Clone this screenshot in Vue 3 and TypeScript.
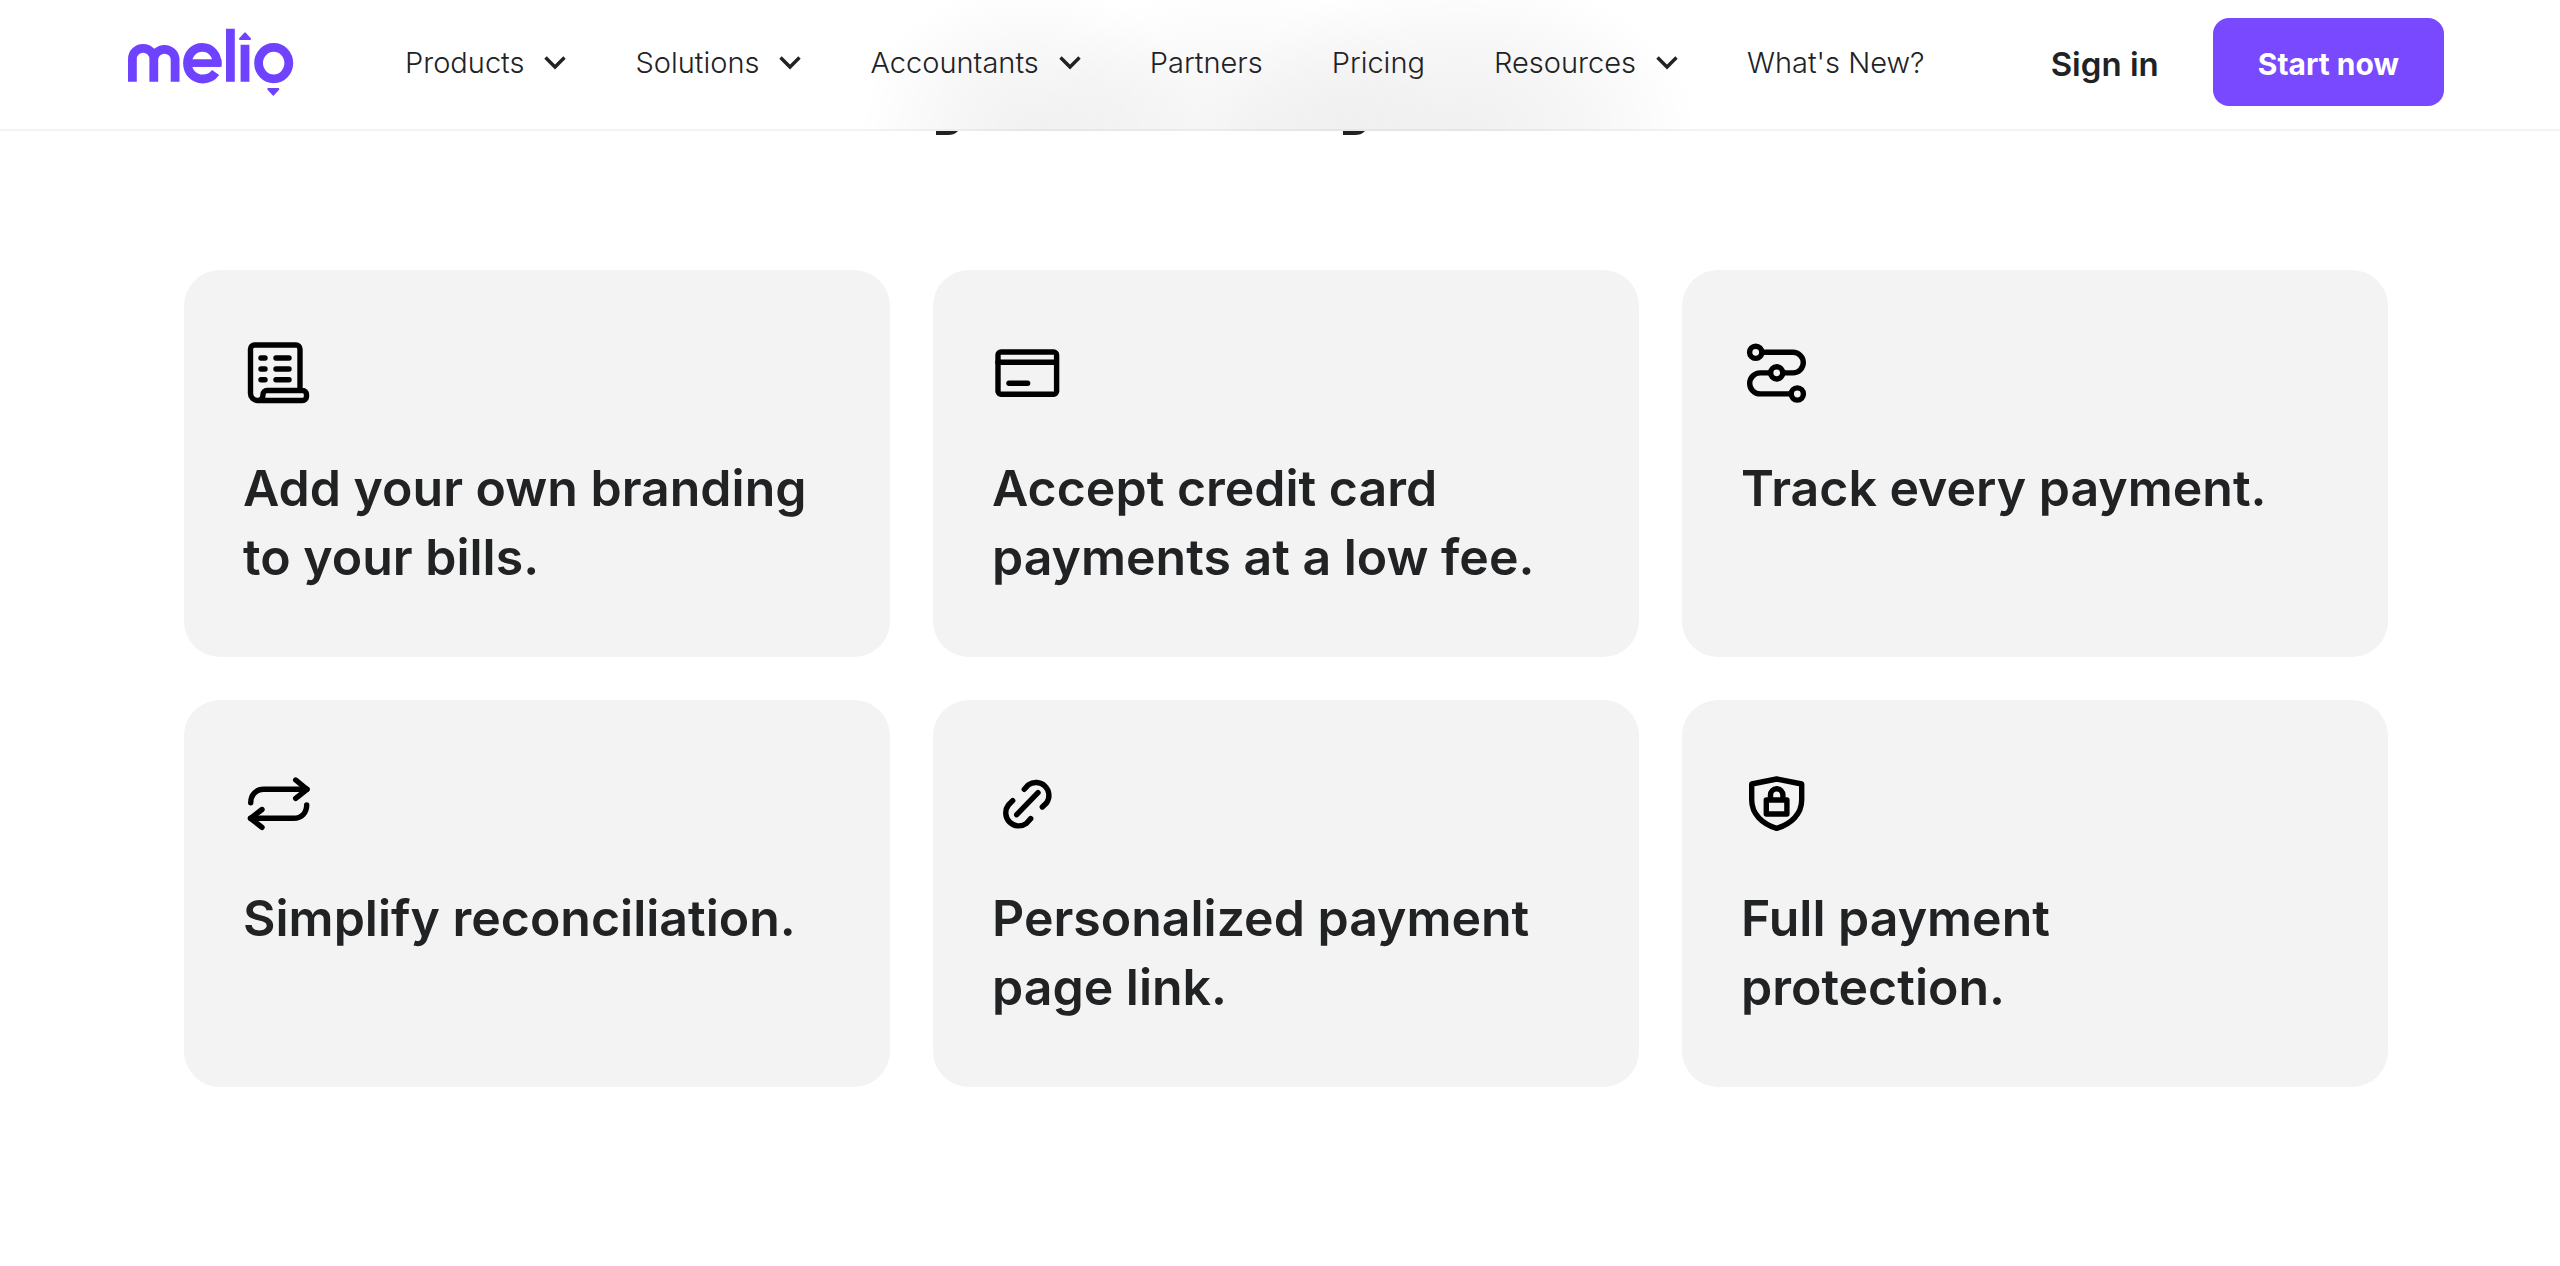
<script setup lang="ts">
interface NavItem {
  label: string
  menu: boolean
}

interface Feature {
  title: string
  icon: string[]
}

const navItems: NavItem[] = [
  { label: 'Products', menu: true },
  { label: 'Solutions', menu: true },
  { label: 'Accountants', menu: true },
  { label: 'Partners', menu: false },
  { label: 'Pricing', menu: false },
  { label: 'Resources', menu: true },
  { label: "What's New?", menu: false },
]

const features: Feature[] = [
  {
    title: 'Add your own branding to your bills.',
    icon: [
      'M56 52V11a4 4 0 0 0-4-4H10.500a4 4 0 0 0-4 4v44.500a7 7 0 0 0 7 7h45a4 4 0 0 0 4-4v-2a4 4 0 0 0-4-4H23a4 4 0 0 0-4 4c0 3.500-1 6-5 6',
      'M17 20h4M32 20h13M17 31h4M32 31h13M17 41.700h4M32 41.700h13',
    ],
  },
  {
    title: 'Accept credit card payments at a low fee.',
    icon: ['M8 14h52.600a3 3 0 0 1 3 3v36.300a3 3 0 0 1-3 3H8a3 3 0 0 1-3-3V17a3 3 0 0 1 3-3z', 'M5 24.300h58', 'M16 45.300h18.600'],
  },
  {
    title: 'Track every payment.',
    icon: [
      'M7.600 14.300a6.100 6.100 0 1 0 12.200 0a6.100 6.100 0 1 0-12.200 0',
      'M28.600 34.900a6.100 6.100 0 1 0 12.200 0a6.100 6.100 0 1 0-12.200 0',
      'M49.200 56a6.100 6.100 0 1 0 12.200 0a6.100 6.100 0 1 0-12.200 0',
      'M20 14.300h31a10.300 10.300 0 0 1 0 20.600H41',
      'M28.500 34.900H18.200a10.500 10.500 0 0 0 0 21H49',
    ],
  },
  {
    title: 'Simplify reconciliation.',
    icon: [
      'M6.700 34.700C6.700 27 12 21.300 19.700 21.300H63',
      'M51.700 12L63 21.300L51.700 30.300',
      'M62.700 37C62.700 45 57.500 50.300 49.700 50.300H6.500',
      'M18 41.500L6.500 50.300L18 59.300',
    ],
  },
  {
    title: 'Personalized payment page link.',
    icon: [
      'M23.700 46.700L45 24.700',
      'M31.300 21.300L35.300 16.900A13 13 0 0 1 53.700 34.700L49.300 39',
      'M19.700 32.700L15.400 37A13 13 0 0 0 33.500 55.300L37.700 50.600',
    ],
  },
  {
    title: 'Full payment protection.',
    icon: [
      'M9.700 16L34.700 11L59.700 16V32C59.700 46 49 56 34.700 60.300C20.400 56 9.700 46 9.700 32z',
      'M24.300 32h20.600v14H24.300z',
      'M28.500 31V27a6.200 6.200 0 0 1 12.400 0v4',
    ],
  },
]
</script>

<template>
  <div class="page">
    <header class="header">
      <a class="brand" href="#" aria-label="Melio home">
        <svg width="166" height="69" viewBox="0 0 166 69" fill="none" stroke="currentColor" stroke-width="8.800">
          <path d="M4.400 53.700V31a10.700 10.700 0 0 1 21.400 0V53.700M25.800 31a10.700 10.700 0 0 1 21.300 0V53.700" />
          <path d="M89.300 37C89.300 26 82.600 19.400 74.300 19.400C66 19.400 59.500 26 59.500 35.200C59.500 44.300 66 51 74.700 51C80 51 84.500 48.900 87.600 44.500" />
          <path d="M62 35.100H93.500" stroke-width="7.700" />
          <path d="M102.400 .700V53.700M117 16.700V53.700" />
          <ellipse cx="145.700" cy="35.100" rx="15.100" ry="15.800" />
          <g fill="currentColor" stroke-width="2" stroke-linejoin="round">
            <path d="M117 5.300L122 11H112z" />
            <path d="M145.300 66.700L150.300 61H140.300z" />
          </g>
        </svg>
      </a>

      <nav class="nav" aria-label="Main">
        <template v-for="item in navItems" :key="item.label">
          <button v-if="item.menu" class="nav-item" type="button">
            {{ item.label }}
            <svg width="22" height="16" viewBox="0 0 22 16" fill="none" stroke="currentColor" stroke-width="3.400">
              <path d="M1.500 2.500L11 12L20.500 2.500" />
            </svg>
          </button>
          <a v-else class="nav-item" href="#">{{ item.label }}</a>
        </template>
      </nav>

      <div class="actions">
        <a class="sign-in" href="#">Sign in</a>
        <button class="start" type="button">Start now</button>
      </div>
    </header>

    <main class="content">
      <div class="headline-edge" aria-hidden="true">
        <svg v-for="n in 2" :key="n" width="22" height="4" viewBox="0 0 22 4" fill="currentColor">
          <path d="M0 0H22C19 3 16 4 12 4H0z" />
        </svg>
      </div>

      <section class="grid">
        <article v-for="feature in features" :key="feature.title" class="card">
          <svg class="icon" viewBox="-1 0 70 70" aria-hidden="true">
            <path v-for="d in feature.icon" :key="d" :d="d" />
          </svg>
          <h3 class="title">{{ feature.title }}</h3>
        </article>
      </section>
    </main>
  </div>
</template>

<style>
body {
  background: #fff;
}
</style>

<style scoped>
.page {
  color: #212224;
  font-family: Inter, "Liberation Sans", sans-serif;
}

.header {
  display: flex;
  align-items: center;
  padding: 18px 116px 23px 128px;
  border-bottom: 2px solid rgba(30, 30, 60, 0.05);
  background:
    radial-gradient(ellipse 170px 150px at 1030px 131px, rgba(0, 0, 0, 0.055), rgba(0, 0, 0, 0.03) 50%, transparent),
    radial-gradient(ellipse 210px 150px at 1240px 131px, rgba(0, 0, 0, 0.045), rgba(0, 0, 0, 0.025) 50%, transparent),
    radial-gradient(ellipse 240px 160px at 1460px 131px, rgba(0, 0, 0, 0.06), rgba(0, 0, 0, 0.035) 50%, transparent),
    #fff;
  background-origin: border-box;
}

.brand {
  display: flex;
  color: #6f42ff;
}

.nav {
  display: flex;
  align-items: center;
  gap: 69px;
  margin-left: 111px;
}

.nav-item {
  display: flex;
  align-items: center;
  gap: 20px;
  padding: 2px 0 0;
  border: 0;
  background: none;
  color: inherit;
  font: inherit;
  font-size: 29px;
  font-weight: 300;
  line-height: 40px;
  text-decoration: none;
  white-space: nowrap;
}

.actions {
  display: flex;
  align-items: center;
  gap: 54px;
  margin-left: auto;
}

.sign-in {
  padding-top: 4px;
  color: inherit;
  font-size: 33px;
  font-weight: 600;
  line-height: 40px;
  text-decoration: none;
  white-space: nowrap;
}

.start {
  height: 88px;
  padding: 4px 45px 0;
  border: 0;
  border-radius: 16px;
  background: #7849ff;
  color: #fff;
  font: inherit;
  font-size: 30px;
  font-weight: 700;
  line-height: 40px;
  white-space: nowrap;
}

.content {
  padding: 0 172px 179px 184px;
}

.headline-edge {
  display: flex;
  gap: 385px;
  padding-left: 34.1%;
}

.headline-edge svg {
  display: block;
}

.grid {
  display: grid;
  grid-template-columns: repeat(3, minmax(0, 1fr));
  gap: 43px;
  margin-top: 135px;
}

.card {
  box-sizing: border-box;
  min-height: 387px;
  padding: 68px 68px 60px 59px;
  border-radius: 36px;
  background: #f3f3f3;
}

.icon {
  display: block;
  width: 70px;
  height: 70px;
  fill: none;
  stroke: #000;
  stroke-width: 5.400;
  stroke-linecap: round;
  stroke-linejoin: round;
}

.title {
  margin: 46px 0 0;
  font-size: 50px;
  font-weight: 600;
  line-height: 69px;
}
</style>
